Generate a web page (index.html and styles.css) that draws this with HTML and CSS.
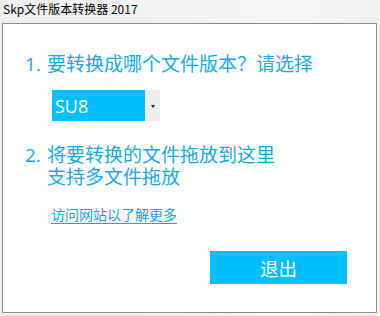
FILE: index.html
```html
<!DOCTYPE html>
<html lang="zh-CN">
<head>
<meta charset="utf-8">
<title>Skp文件版本转换器 2017</title>
<link rel="stylesheet" href="styles.css">
</head>
<body>
<div class="window">
  <div class="titlebar">Skp文件版本转换器 2017</div>
  <div class="panel">
    <div class="step step1">
      <span class="num">1.</span>
      <div class="step-text">要转换成哪个文件版本？请选择</div>
    </div>
    <div class="select">
      <div class="select-value">SU8</div>
      <div class="select-btn"><span class="arrow"></span></div>
    </div>
    <div class="step step2">
      <span class="num">2.</span>
      <div class="step-text">将要转换的文件拖放到这里<br>支持多文件拖放</div>
    </div>
    <a class="link" href="#">访问网站以了解更多</a>
    <div class="exit">退出</div>
  </div>
</div>
</body>
</html>
```
FILE: styles.css
```css
html, body {
  margin: 0;
  padding: 0;
}
body {
  width: 380px;
  height: 316px;
  background: #f0f0f0;
  font-family: "Noto Sans CJK SC", "Noto Sans", sans-serif;
  overflow: hidden;
}
.window {
  display: flex;
  flex-direction: column;
  width: 380px;
  height: 316px;
  background: linear-gradient(90deg, #efefef 0%, #f3f3f3 55%, #f6f6f6 75%, #f1f1f1 100%);
}
.titlebar {
  height: 23px;
  box-sizing: border-box;
  padding-left: 3px;
  font-size: 12px;
  line-height: 18px;
  color: #000;
}
.panel {
  margin: 0 3px 3px 2px;
  height: 290px;
  box-sizing: border-box;
  border: 1px solid #8c8c8c;
  background: #fff;
  display: flex;
  flex-direction: column;
  align-items: flex-start;
}
.step {
  display: flex;
  align-items: flex-start;
  margin-left: 22px;
  font-family: "Open Sans", "Noto Sans CJK SC", sans-serif;
  font-size: 19px;
  line-height: 22px;
  color: #1aaae2;
  white-space: nowrap;
}
.num {
  width: 22px;
  flex: none;
}
.step1 {
  margin-top: 29px;
}
.select {
  margin-top: 15px;
  margin-left: 49px;
  height: 31px;
  display: flex;
}
.select-value {
  width: 93px;
  background: #00bfff;
  color: #fff;
  font-family: "Open Sans", "Noto Sans", sans-serif;
  font-size: 18px;
  display: flex;
  align-items: center;
  padding-left: 3px;
  box-sizing: border-box;
}
.select-btn {
  width: 15px;
  background: #eeeeee;
  display: flex;
  align-items: center;
  justify-content: center;
}
.arrow {
  width: 0;
  height: 0;
  border-left: 2.5px solid transparent;
  border-right: 2.5px solid transparent;
  border-top: 3px solid #222;
  margin-top: 1px;
}
.step2 {
  margin-top: 23px;
}
.link {
  margin-top: 17px;
  margin-left: 48px;
  font-size: 14px;
  line-height: 18px;
  color: #1ba3de;
  text-decoration: underline;
  text-underline-offset: 3px;
}
.exit {
  margin-top: 28px;
  align-self: flex-end;
  margin-right: 29px;
  width: 137px;
  height: 33px;
  background: #00bfff;
  color: #fff;
  font-size: 18.5px;
  display: flex;
  align-items: center;
  justify-content: center;
}
```
